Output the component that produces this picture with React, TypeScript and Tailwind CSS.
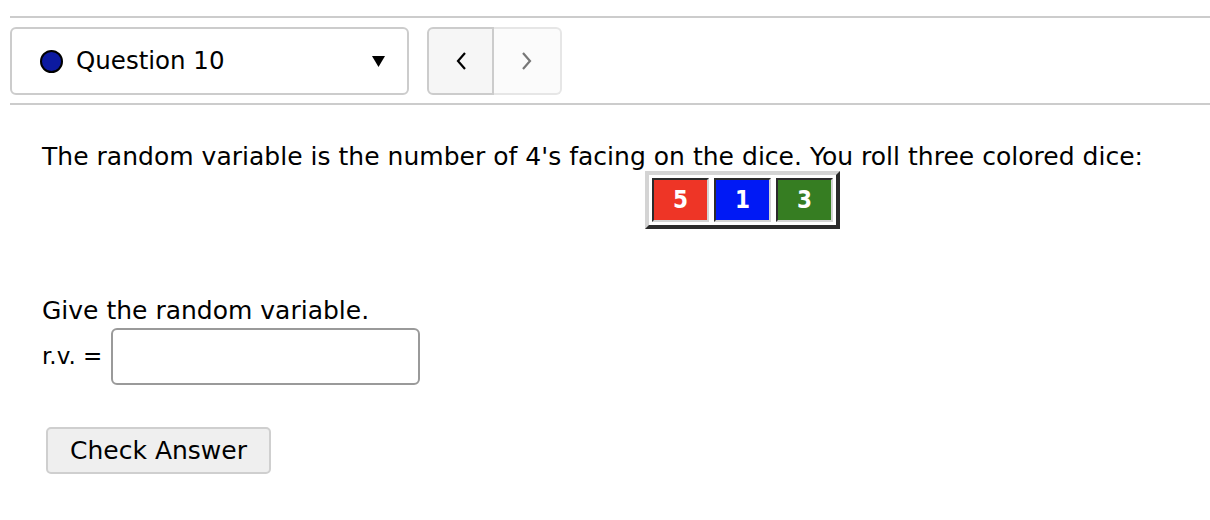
import React from "react";

const font = { fontFamily: '"DejaVu Sans", sans-serif' };

function Die({ value, color }: { value: number; color: string }) {
  return (
    <div
      className={`w-[57px] h-[44px] flex items-center justify-center border-2 border-t-[#2b2b2b] border-l-[#2b2b2b] border-b-[#d4d4d4] border-r-[#d4d4d4] text-white font-bold text-[24px] ${color}`}
      style={{ fontFamily: '"DejaVu Sans Condensed", "DejaVu Sans", sans-serif' }}
    >
      {value}
    </div>
  );
}

export default function App() {
  return (
    <div className="bg-white w-[1210px] h-[520px] text-black" style={font}>
      <div className="pl-[10px]">
        <div className="pt-[16px]">
          <div className="h-[2px] bg-[#cccccc]" />
        </div>

        <div className="flex mt-[9px] h-[68px]">
          <div className="w-[399px] h-full border-2 border-[#cccccc] rounded-[6px] flex items-center pl-[28px] pr-[22px]">
            <span className="w-[23px] h-[23px] rounded-full bg-[#0c1aa0] border-2 border-black" />
            <span className="ml-[13px] text-[24.5px] leading-none">Question 10</span>
            <span className="ml-auto">
              <svg width="13" height="11" viewBox="0 0 13 11">
                <path d="M0 0 H13 L6.5 11 Z" fill="#000" />
              </svg>
            </span>
          </div>

          <div className="ml-[18px] flex h-full">
            <button className="w-[67px] h-full bg-[#f6f6f6] border-2 border-[#cccccc] rounded-l-[6px] flex items-center justify-center">
              <svg width="12" height="20" viewBox="0 0 12 20">
                <path d="M10 2 L3 10 L10 18" fill="none" stroke="#000" strokeWidth="2.2" />
              </svg>
            </button>
            <button className="w-[68px] h-full bg-[#fbfbfb] border-2 border-l-0 border-[#e6e6e6] rounded-r-[6px] flex items-center justify-center">
              <svg width="12" height="20" viewBox="0 0 12 20">
                <path d="M2 2 L9 10 L2 18" fill="none" stroke="#777" strokeWidth="2.2" />
              </svg>
            </button>
          </div>
        </div>

        <div className="mt-[8px] h-[2px] bg-[#cccccc]" />
      </div>

      <div className="pl-[42px] pt-[36px]">
        <p className="text-[25px] leading-[32px] tracking-[0.02px]">
          The random variable is the number of 4's facing on the dice. You roll three colored dice:
        </p>
        <div className="flex pl-[603px] -mt-[2px]">
          <div className="flex gap-[5px] p-[3px] border-[4px] border-t-[#d4d4d4] border-l-[#d4d4d4] border-b-[#2b2b2b] border-r-[#2b2b2b] bg-white">
            <Die value={5} color="bg-[#ee3526]" />
            <Die value={1} color="bg-[#0019f5]" />
            <Die value={3} color="bg-[#367d22]" />
          </div>
        </div>

        <p className="mt-[66px] text-[25px] leading-[32px]">Give the random variable.</p>
        <div className="flex items-center mt-[1px]">
          <span className="text-[23px] w-[69px]">r.v. =</span>
          <input
            className="w-[309px] h-[57px] border-2 border-[#9a9a9a] rounded-[6px] outline-none px-2"
            type="text"
          />
        </div>

        <button className="mt-[42px] ml-[4px] w-[225px] h-[47px] bg-[#efefef] border-2 border-[#cfcfcf] rounded-[5px] text-[25px] flex items-center justify-center">
          Check Answer
        </button>
      </div>
    </div>
  );
}
